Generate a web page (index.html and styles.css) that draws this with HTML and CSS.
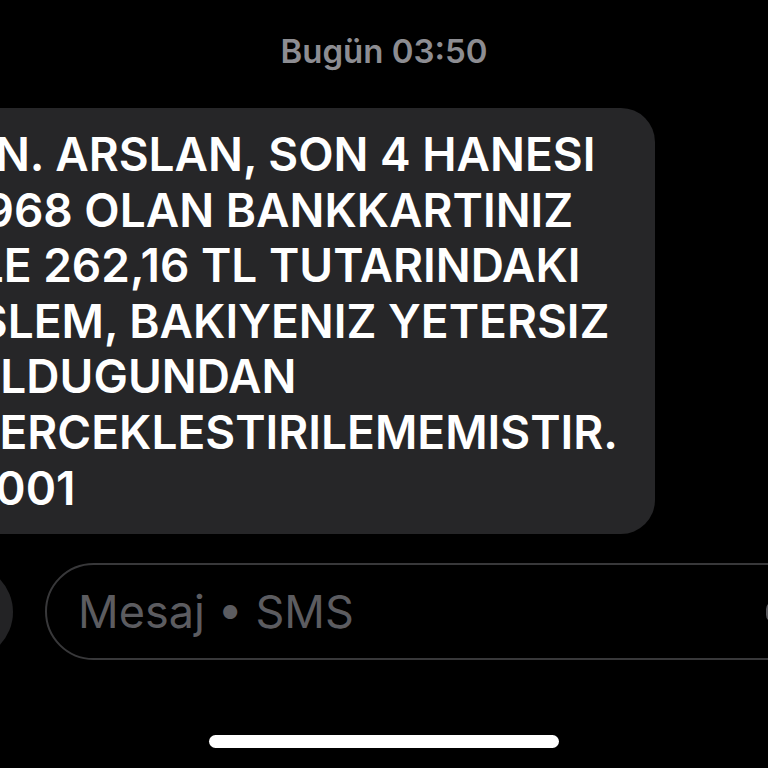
FILE: index.html
```html
<!DOCTYPE html>
<html lang="tr">
<head>
<meta charset="utf-8">
<title>Mesajlar</title>
<link rel="stylesheet" href="styles.css">
</head>
<body>
<main class="screen">
  <div class="stamp">Bugün 03:50</div>
  <div class="bubble">
    <div class="line">SN. ARSLAN, SON 4 HANESI</div>
    <div class="line">1968 OLAN BANKKARTINIZ</div>
    <div class="line">ILE 262,16 TL TUTARINDAKI</div>
    <div class="line">ISLEM, BAKIYENIZ YETERSIZ</div>
    <div class="line">OLDUGUNDAN</div>
    <div class="line">GERCEKLESTIRILEMEMISTIR.</div>
    <div class="line">B001</div>
  </div>
  <div class="composer">
    <div class="plus"></div>
    <div class="field">
      <span class="placeholder">Mesaj • SMS</span>
      <svg class="mic" width="30" height="40" viewBox="0 0 30 40"><rect x="1.5" y="11" width="12" height="18" rx="6" fill="none" stroke="#58585c" stroke-width="3"/></svg>
    </div>
  </div>
  <div class="home"></div>
</main>
</body>
</html>
```
FILE: styles.css
```css
html, body {
  margin: 0;
  padding: 0;
  background: #000;
}
.screen {
  width: 768px;
  height: 768px;
  overflow: hidden;
  background: #000;
  display: flex;
  flex-direction: column;
  font-family: Inter, "Noto Sans", sans-serif;
}
.stamp {
  margin-top: 35px;
  height: 33px;
  line-height: 33px;
  font-size: 33px;
  font-weight: 600;
  color: #8d8d92;
  text-align: center;
}
.bubble {
  margin-top: 40px;
  margin-left: -60px;
  width: 715px;
  box-sizing: border-box;
  padding: 19px 0 18px 25px;
  background: #262628;
  border-radius: 34px;
  color: #fff;
  font-size: 46px;
  line-height: 55.6px;
  font-weight: 600;
}
.line {
  white-space: nowrap;
}
.composer {
  margin-top: 29px;
  display: flex;
  align-items: center;
  gap: 32px;
  margin-left: -83px;
}
.plus {
  flex: none;
  width: 96px;
  height: 96px;
  border-radius: 50%;
  background: #232325;
}
.field {
  flex: none;
  width: 800px;
  height: 97px;
  box-sizing: border-box;
  border: 2px solid #38383a;
  border-radius: 49px;
  display: flex;
  align-items: center;
  padding-left: 31px;
}
.placeholder {
  font-size: 45px;
  color: #5c5c60;
  font-weight: 400;
}
.mic {
  margin-left: 412px;
}
.home {
  margin-top: 75px;
  align-self: center;
  width: 350px;
  height: 13px;
  border-radius: 7px;
  background: #fff;
}
```
